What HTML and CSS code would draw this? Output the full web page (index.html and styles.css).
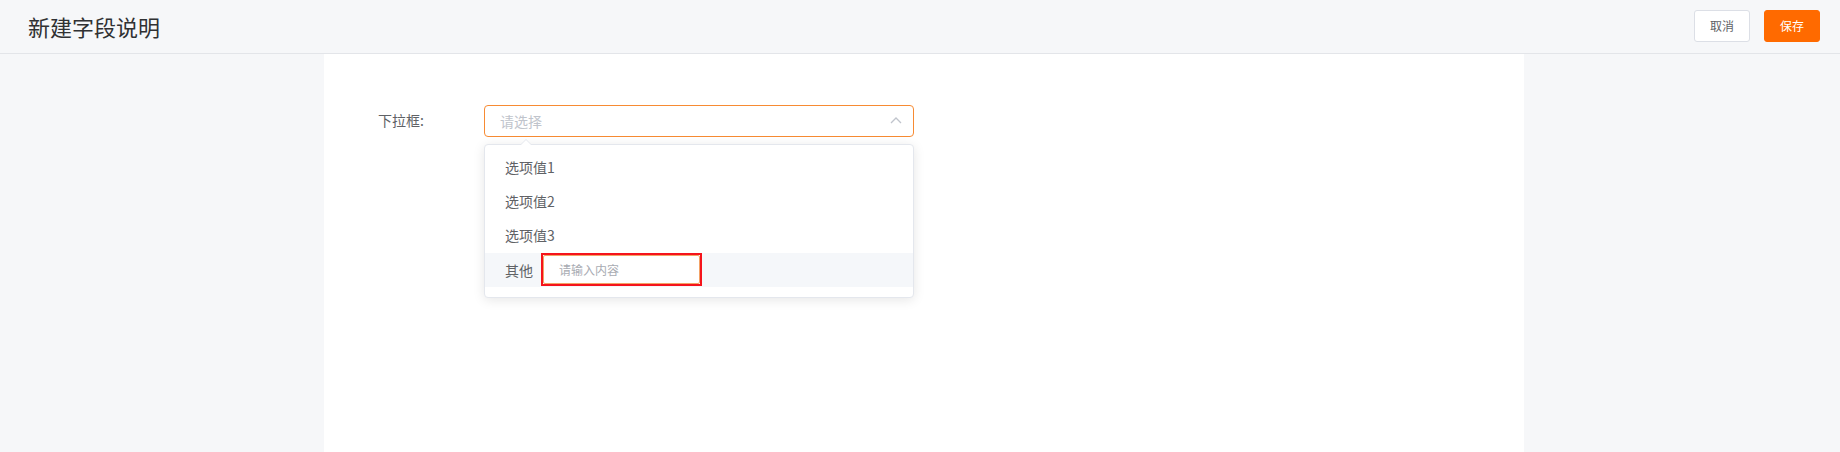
FILE: index.html
```html
<!DOCTYPE html>
<html lang="zh-CN">
<head>
    <meta charset="UTF-8">
    <meta name="viewport" content="width=device-width, initial-scale=1.0">
    <title>新建字段说明</title>
    <link rel="stylesheet" href="styles.css">
</head>
<body>

    <div class="header">
        <h2 class="page-title">新建字段说明</h2>
        <div class="header-actions">
            <button type="button" class="btn btn-default">取消</button>
            <button type="button" class="btn btn-primary">保存</button>
        </div>
    </div>

    <div class="main">
        <div class="panel">
            <div class="form-item">
                <label class="form-label">下拉框:</label>
                <div class="select">
                    <div class="select-input">
                        <span class="placeholder">请选择</span>
                        <svg class="select-arrow" width="12" height="8" viewBox="0 0 12 8">
                            <path d="M1 7 L6 2 L11 7" fill="none" stroke="#c0c4cc" stroke-width="1.3"/>
                        </svg>
                    </div>

                    <!-- dropdown is open -->
                    <div class="dropdown">
                        <span class="dropdown-arrow"></span>
                        <ul class="option-list">
                            <li class="option">选项值1</li>
                            <li class="option">选项值2</li>
                            <li class="option">选项值3</li>
                            <li class="option option-other">
                                其他
                                <span class="mark-box">
                                    <input type="text" class="other-input" placeholder="请输入内容">
                                </span>
                            </li>
                        </ul>
                    </div>
                </div>
            </div>
        </div>
    </div>

</body>
</html>
```

FILE: styles.css
```css
* {
    box-sizing: border-box;
}

body {
    margin: 0;
    height: 452px;
    overflow: hidden;
    background-color: #f6f7f9;
    font-family: "Noto Sans CJK SC", "Liberation Sans", sans-serif;
    color: #606266;
}

.header {
    height: 54px;
    display: flex;
    align-items: center;
    justify-content: space-between;
    padding: 0 20px 0 28px;
    background-color: #f6f7f9;
    border-bottom: 1px solid #e3e5e9;
}

.page-title {
    margin: 0;
    font-size: 22px;
    font-weight: normal;
    color: #303133;
    padding-bottom: 2px;
}

.header-actions {
    display: flex;
    gap: 14px;
    padding-bottom: 2px;
}

.btn {
    width: 56px;
    height: 32px;
    border-radius: 3px;
    font-family: inherit;
    font-size: 12px;
    cursor: pointer;
}

.btn-default {
    background-color: #fff;
    border: 1px solid #dcdfe6;
    color: #606266;
}

.btn-primary {
    background-color: #ff6a00;
    border: 1px solid #ff6a00;
    color: #fff;
}

.main {
    height: 398px;
    padding-left: 324px;
}

.panel {
    width: 1200px;
    height: 100%;
    background-color: #fff;
    padding: 51px 0 0 54px;
}

.form-item {
    display: flex;
    align-items: flex-start;
}

.form-label {
    width: 106px;
    height: 32px;
    line-height: 31px;
    font-size: 14px;
    color: #606266;
}

.select {
    position: relative;
    width: 430px;
}

.select-input {
    height: 32px;
    border: 1px solid #f78b33;
    border-radius: 4px;
    display: flex;
    align-items: center;
    justify-content: space-between;
    padding: 0 11px 0 15px;
}

.placeholder {
    font-size: 14px;
    color: #c0c4cc;
    margin-top: -1px;
}

.select-arrow {
    display: block;
    margin-top: -2px;
}

.dropdown {
    position: absolute;
    top: 39px;
    left: 0;
    width: 430px;
    background-color: #fff;
    border: 1px solid #e4e7ed;
    border-radius: 4px;
    box-shadow: 0 2px 12px rgba(0, 0, 0, 0.1);
}

.dropdown-arrow {
    position: absolute;
    top: -6px;
    left: 35px;
    width: 0;
    height: 0;
    border-left: 6px solid transparent;
    border-right: 6px solid transparent;
    border-bottom: 6px solid #e4e7ed;
}

.dropdown-arrow::after {
    content: "";
    position: absolute;
    top: 1px;
    left: -5px;
    border-left: 5px solid transparent;
    border-right: 5px solid transparent;
    border-bottom: 5px solid #fff;
}

.option-list {
    list-style: none;
    margin: 0;
    padding: 6px 0 10px;
}

.option {
    height: 34px;
    line-height: 33px;
    padding: 0 20px;
    font-size: 14px;
    color: #606266;
}

.option-other {
    display: flex;
    align-items: center;
    background-color: #f5f7fa;
}

.mark-box {
    display: block;
    margin: -2px 0 0 8px;
    width: 161px;
    height: 33px;
    border: 2px solid #f5141c;
}

.other-input {
    display: block;
    width: 100%;
    height: 100%;
    border: 1px solid #f3a266;
    border-radius: 2px;
    padding: 0 15px;
    font-family: inherit;
    font-size: 12px;
    color: #606266;
    outline: none;
}

.other-input::placeholder {
    color: #a8abb2;
}
```
